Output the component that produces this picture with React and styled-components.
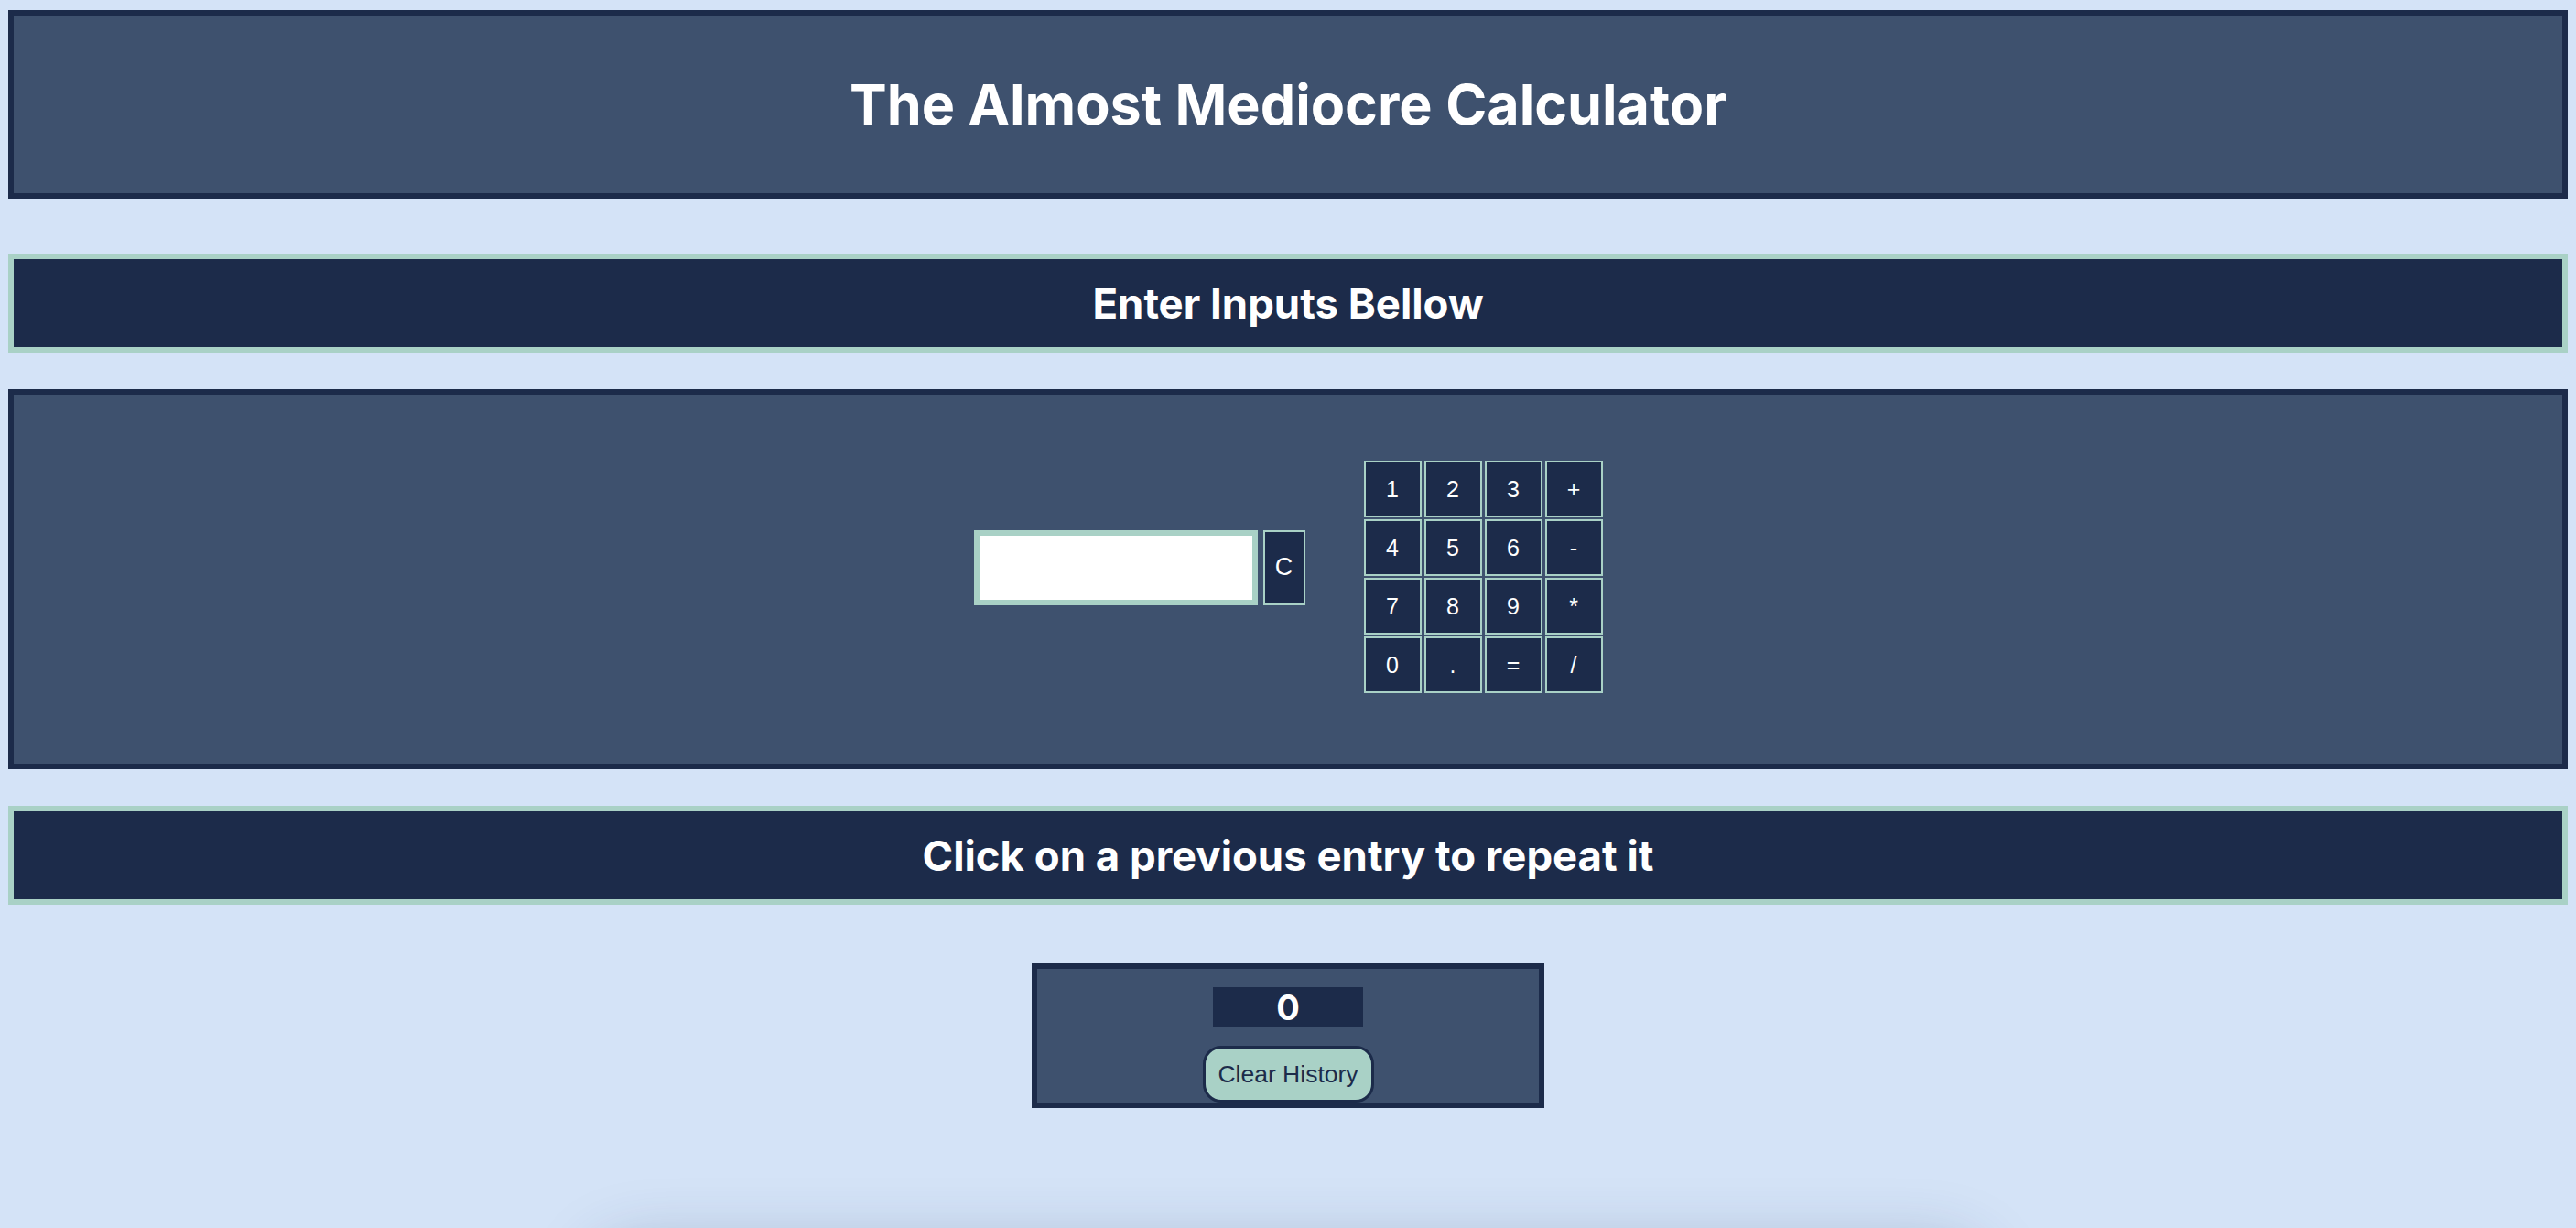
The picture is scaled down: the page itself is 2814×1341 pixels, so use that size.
import React, { useState } from "react";
import styled, { createGlobalStyle } from "styled-components";

const navy = "#1c2b4a";
const slate = "#3e516e";
const teal = "#a9d1c6";
const sky = "#d4e3f7";

const GlobalStyle = createGlobalStyle`
  html, body {
    margin: 0;
    padding: 0;
    background: ${sky};
  }
  * {
    box-sizing: border-box;
  }
`;

const Page = styled.div`
  display: flex;
  flex-direction: column;
  align-items: stretch;
  padding: 11px 9px 0;
  font-family: Inter, "Noto Sans", sans-serif;
`;

const Header = styled.header`
  height: 206px;
  display: flex;
  align-items: center;
  justify-content: center;
  background: ${slate};
  border: 6px solid ${navy};
`;

const Title = styled.h1`
  margin: 0;
  color: #fff;
  font-size: 61px;
  font-weight: 700;
  letter-spacing: 0;
`;

const Banner = styled.div`
  height: 108px;
  margin-top: ${(p) => p.$top}px;
  display: flex;
  align-items: center;
  justify-content: center;
  background: ${navy};
  border: 6px solid ${teal};
  color: #fff;
  font-size: 45.5px;
  font-weight: 700;
`;

const Panel = styled.section`
  margin-top: 40px;
  display: flex;
  align-items: center;
  justify-content: center;
  padding: 72px 0 77px;
  background: ${slate};
  border: 6px solid ${navy};
`;

const InputGroup = styled.div`
  display: flex;
  gap: 6px;
  margin-bottom: 21px;
`;

const Display = styled.input`
  width: 310px;
  height: 82px;
  border: 6px solid ${teal};
  background: #fff;
  outline: none;
  font-family: "Liberation Sans", Arial, sans-serif;
  font-size: 28px;
  padding: 0 10px;
`;

const Key = styled.button`
  width: ${(p) => p.$w || 63}px;
  height: ${(p) => p.$h || 62}px;
  padding: 0;
  background: ${navy};
  border: 2px solid ${teal};
  color: #fff;
  font-family: "Liberation Sans", Arial, sans-serif;
  font-size: ${(p) => p.$size || 25}px;
  cursor: pointer;
`;

const Keypad = styled.div`
  margin-left: 64px;
  display: grid;
  grid-template-columns: repeat(4, 63px);
  grid-auto-rows: 62px;
  column-gap: 3px;
  row-gap: 2px;
`;

const History = styled.section`
  align-self: center;
  width: 560px;
  margin-top: 64px;
  display: flex;
  flex-direction: column;
  align-items: center;
  gap: 20px;
  padding-top: 20px;
  background: ${slate};
  border: 6px solid ${navy};
`;

const Count = styled.div`
  width: 164px;
  height: 44px;
  display: flex;
  align-items: center;
  justify-content: center;
  background: ${navy};
  color: #fff;
  font-size: 38px;
  font-weight: 700;
`;

const ClearButton = styled.button`
  width: 187px;
  height: 62px;
  padding: 0;
  background: ${teal};
  border: 3px solid ${navy};
  border-radius: 20px;
  color: ${navy};
  font-family: "Liberation Sans", Arial, sans-serif;
  font-size: 26.5px;
  cursor: pointer;
`;

const Shade = styled.div`
  align-self: center;
  width: 1500px;
  height: 120px;
  margin-top: 160px;
  border-radius: 40px;
  box-shadow: 0 0 70px 10px rgba(40, 60, 100, 0.28);
`;

const keys = ["1", "2", "3", "+", "4", "5", "6", "-", "7", "8", "9", "*", "0", ".", "=", "/"];

export default function App() {
  const [value, setValue] = useState("");
  const [history, setHistory] = useState([]);

  const press = (k) => {
    if (k === "=") {
      setHistory((h) => [...h, value]);
      return;
    }
    setValue((v) => v + k);
  };

  return (
    <>
      <GlobalStyle />
      <Page>
        <Header>
          <Title>The Almost Mediocre Calculator</Title>
        </Header>
        <Banner $top={60}>Enter Inputs Bellow</Banner>
        <Panel>
          <InputGroup>
            <Display value={value} onChange={(e) => setValue(e.target.value)} />
            <Key $w={46} $h={82} $size={27} onClick={() => setValue("")}>
              C
            </Key>
          </InputGroup>
          <Keypad>
            {keys.map((k) => (
              <Key key={k} onClick={() => press(k)}>
                {k}
              </Key>
            ))}
          </Keypad>
        </Panel>
        <Banner $top={40}>Click on a previous entry to repeat it</Banner>
        <History>
          <Count>{history.length}</Count>
          <ClearButton onClick={() => setHistory([])}>Clear History</ClearButton>
        </History>
        <Shade />
      </Page>
    </>
  );
}
